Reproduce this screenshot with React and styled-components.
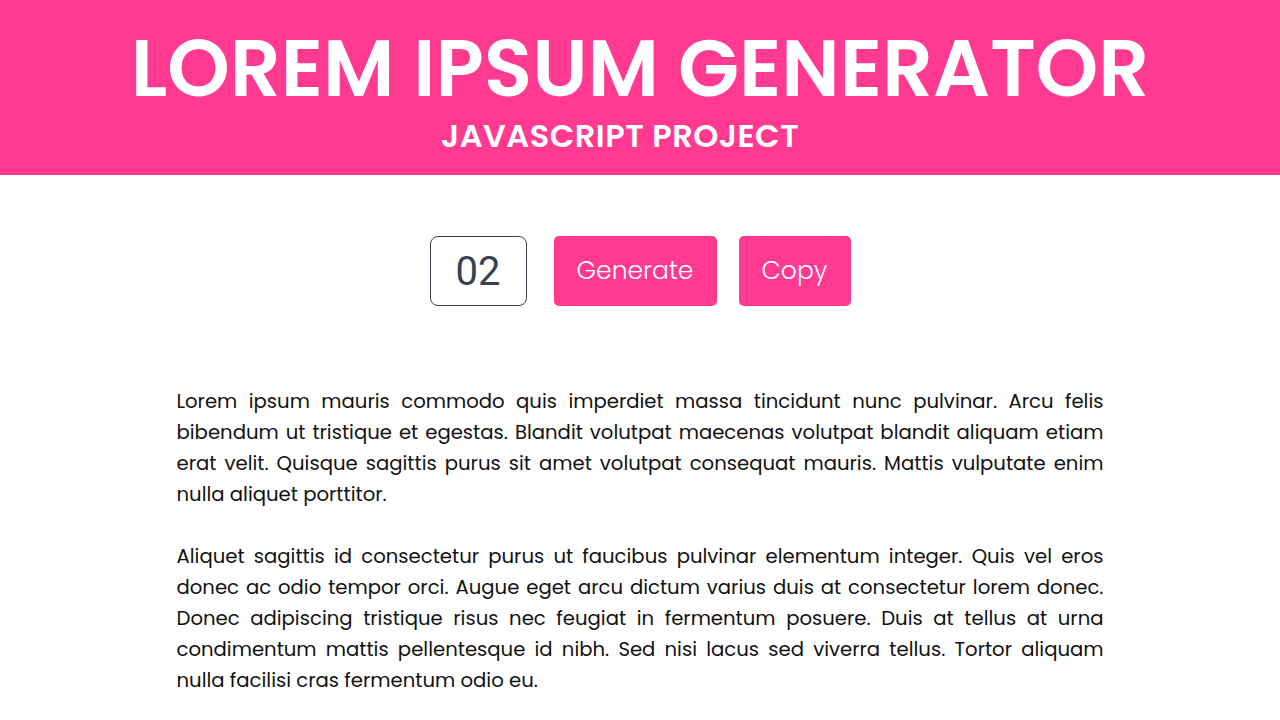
import React, { useState } from 'react';
import styled, { createGlobalStyle } from 'styled-components';

const GlobalStyle = createGlobalStyle`
  * { box-sizing: border-box; }
  body {
    margin: 0;
    background: #fff;
    font-family: "Poppins", "Open Sans", "DejaVu Sans", sans-serif;
    color: #111;
  }
`;

const PINK = '#ff3a90';

const paragraphs = [
  'Lorem ipsum mauris commodo quis imperdiet massa tincidunt nunc pulvinar. Arcu felis bibendum ut tristique et egestas. Blandit volutpat maecenas volutpat blandit aliquam etiam erat velit. Quisque sagittis purus sit amet volutpat consequat mauris. Mattis vulputate enim nulla aliquet porttitor.',
  'Aliquet sagittis id consectetur purus ut faucibus pulvinar elementum integer. Quis vel eros donec ac odio tempor orci. Augue eget arcu dictum varius duis at consectetur lorem donec. Donec adipiscing tristique risus nec feugiat in fermentum posuere. Duis at tellus at urna condimentum mattis pellentesque id nibh. Sed nisi lacus sed viverra tellus. Tortor aliquam nulla facilisi cras fermentum odio eu.',
];

export default function App() {
  const [count, setCount] = useState('02');

  return (
    <>
      <GlobalStyle />
      <Header>
        <Title>LOREM IPSUM GENERATOR</Title>
        <Subtitle>JAVASCRIPT PROJECT</Subtitle>
      </Header>
      <Controls>
        <CountInput value={count} onChange={(e) => setCount(e.target.value)} />
        <Button wide>Generate</Button>
        <Button>Copy</Button>
      </Controls>
      <Output>
        {paragraphs.map((p, i) => (
          <Para key={i}>{p}</Para>
        ))}
      </Output>
    </>
  );
}

const Header = styled.header`
  background: ${PINK};
  height: 175px;
  display: flex;
  flex-direction: column;
  align-items: center;
  padding-top: 27px;
  color: #fff;
`;

const Title = styled.h1`
  margin: 0;
  font-size: 79.5px;
  font-weight: 600;
  line-height: 84px;
`;

const Subtitle = styled.h2`
  margin: 7px 40px 0 0;
  font-size: 32px;
  font-weight: 600;
  line-height: 36px;
  letter-spacing: 0.5px;
`;

const Controls = styled.div`
  display: flex;
  justify-content: center;
  align-items: center;
  margin-top: 61px;
`;

const CountInput = styled.input`
  width: 97px;
  height: 70px;
  border: 1px solid #374151;
  border-radius: 8px;
  text-align: center;
  font-family: "Roboto", "Liberation Sans", sans-serif;
  font-size: 40px;
  color: #374151;
  outline: none;
  margin-right: 27px;
`;

const Button = styled.button`
  width: ${(p) => (p.wide ? '163px' : '112px')};
  height: 70px;
  border: none;
  border-radius: 5px;
  background: ${PINK};
  color: #fff;
  font-family: "Poppins", "Open Sans", "DejaVu Sans", sans-serif;
  font-size: 25px;
  font-weight: 300;
  cursor: pointer;
  margin-right: ${(p) => (p.wide ? '22px' : '0')};
`;

const Output = styled.div`
  width: 927px;
  margin: 80px auto 0;
`;

const Para = styled.p`
  margin: 0 0 31px;
  font-size: 19.65px;
  line-height: 31px;
  text-align: justify;
`;
